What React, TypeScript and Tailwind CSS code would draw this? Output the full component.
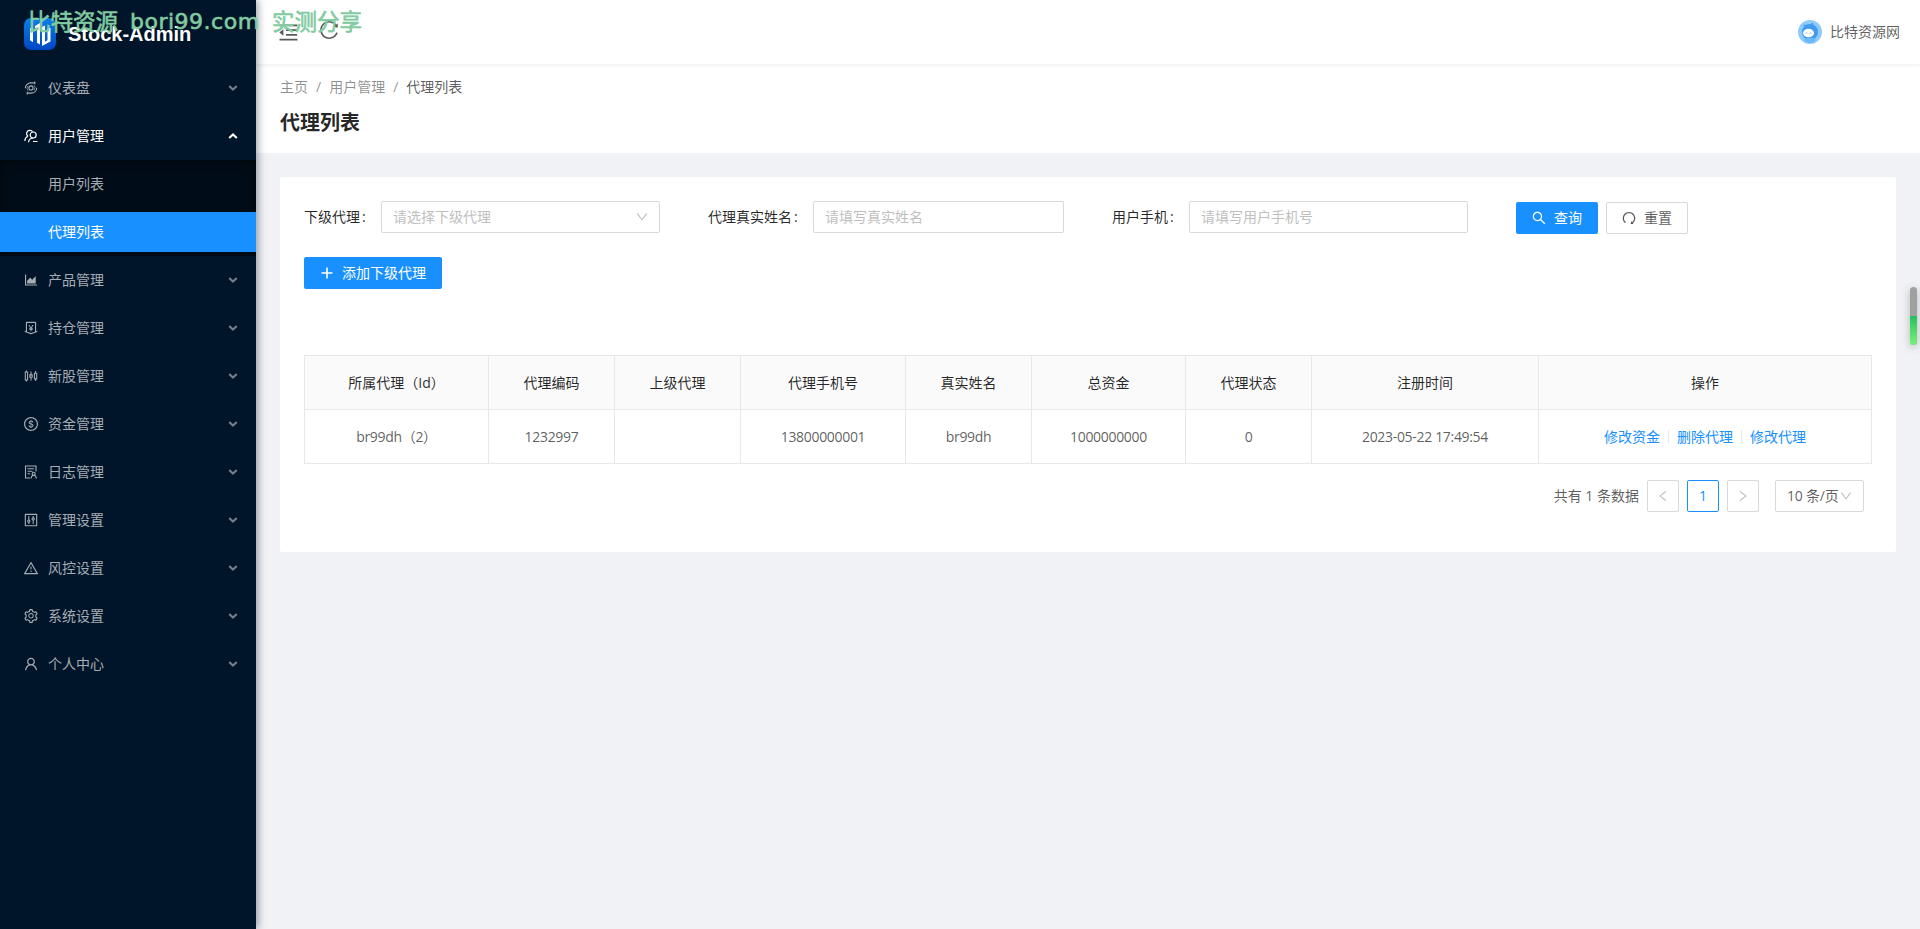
import { useState } from "react";
import type { ReactNode } from "react";
import type { IconType } from "react-icons";
import {
  AiOutlineAreaChart,
  AiOutlineControl,
  AiOutlineDollar,
  AiOutlineDown,
  AiOutlineLeft,
  AiOutlineMenuFold,
  AiOutlineMoneyCollect,
  AiOutlineRedo,
  AiOutlineReload,
  AiOutlineRight,
  AiOutlineSearch,
  AiOutlineSetting,
  AiOutlineSliders,
  AiOutlineUser,
  AiOutlineWarning,
} from "react-icons/ai";

interface MenuEntry {
  title: string;
  icon: IconType | (() => ReactNode);
  children?: string[];
}

interface Column {
  title: string;
  width: string;
  value: string;
}

function DashboardIcon() {
  return (
    <svg width="16" height="16" viewBox="-1 -1 16 16" fill="none" stroke="currentColor" strokeWidth="1.1">
      <circle cx="7" cy="7" r="2.1" />
      <path d="M1.300 7.200C1.300 4 3.800 1.900 7 1.900h4.300M10.800 .6v2.700M12.700 6.800c0 3.200-2.500 5.300-5.700 5.300H2.700M3.200 13.400v-2.700" />
      <path d="M4 9.800A4 4 0 0 1 3.800 4.800M10 4.200a4 4 0 0 1 .2 5" strokeWidth=".7" />
    </svg>
  );
}

function UsersIcon() {
  return (
    <svg width="16" height="16" viewBox="-1 -1 16 16" fill="none" stroke="currentColor" strokeWidth="1.2">
      <path d="M4 7.300A3.300 3.300 0 1 1 8.600 2.700M.8 12c.1-2.300 1.400-4 3.200-4.700" />
      <circle cx="9.200" cy="6" r="3" />
      <path d="M4.500 13.200c.3-2.400 1.700-4.200 4.700-4.200M9 12.500h4.500" />
    </svg>
  );
}

function LogIcon() {
  return (
    <svg width="16" height="16" viewBox="-1 -1 16 16" fill="none" stroke="currentColor" strokeWidth="1.1">
      <path d="M6 13H1.500V1h10.500v5.500M3.500 3.700h6.500M3.500 6.200h5M3.500 8.700h2.500" />
      <circle cx="9.700" cy="8.800" r="1.500" />
      <path d="M7 13.500c.2-1.800 1.100-3 2.700-3.200 1.600.2 2.500 1.400 2.700 3.200" />
    </svg>
  );
}

const menus: MenuEntry[] = [
  { title: "仪表盘", icon: DashboardIcon },
  { title: "用户管理", icon: UsersIcon, children: ["用户列表", "代理列表"] },
  { title: "产品管理", icon: AiOutlineAreaChart },
  { title: "持仓管理", icon: AiOutlineMoneyCollect },
  { title: "新股管理", icon: AiOutlineSliders },
  { title: "资金管理", icon: AiOutlineDollar },
  { title: "日志管理", icon: LogIcon },
  { title: "管理设置", icon: AiOutlineControl },
  { title: "风控设置", icon: AiOutlineWarning },
  { title: "系统设置", icon: AiOutlineSetting },
  { title: "个人中心", icon: AiOutlineUser },
];

const columns: Column[] = [
  { title: "所属代理（Id）", width: "w-[184px]", value: "br99dh（2）" },
  { title: "代理编码", width: "w-[126px]", value: "1232997" },
  { title: "上级代理", width: "w-[126px]", value: "" },
  { title: "代理手机号", width: "w-[165px]", value: "13800000001" },
  { title: "真实姓名", width: "w-[126px]", value: "br99dh" },
  { title: "总资金", width: "w-[154px]", value: "1000000000" },
  { title: "代理状态", width: "w-[126px]", value: "0" },
  { title: "注册时间", width: "w-[227px]", value: "2023-05-22 17:49:54" },
];

const actions = ["修改资金", "删除代理", "修改代理"];

function Arrow({ up }: { up?: boolean }) {
  return (
    <svg
      width="10"
      height="8"
      viewBox="0 0 10 8"
      fill="none"
      stroke="currentColor"
      strokeWidth="2.1"
      className={up ? "rotate-180" : "opacity-70"}
    >
      <path d="M1.200 2L5 5.500 8.800 2" />
    </svg>
  );
}

function Logo() {
  return (
    <svg width="32" height="32" viewBox="0 0 32 32">
      <defs>
        <linearGradient id="logo" x1="0" y1="0" x2="0" y2="1">
          <stop offset="0" stopColor="#0c7fe6" />
          <stop offset="1" stopColor="#0048c4" />
        </linearGradient>
      </defs>
      <rect width="32" height="32" rx="7" fill="url(#logo)" />
      <path
        d="M6 10.500l3-1.800v15.500l-3-2zM11 8l5-3v21.500l-3-1.800V9.500l-2 1zM18 9l3-1.500v16.300l2.500-1.500V10h3v13.500L18 28z"
        fill="#fff"
      />
    </svg>
  );
}

function Avatar() {
  return (
    <svg width="24" height="24" viewBox="0 0 24 24">
      <circle cx="12" cy="12" r="12" fill="#8ecbfa" />
      <path d="M6 5l3 1M14 3l1 3" stroke="#3b8fe6" strokeWidth="1.300" />
      <circle cx="12" cy="12" r="8" fill="#3f9af0" />
      <path d="M6 20c2-3 10-3 12 0-3 4-9 4-12 0z" fill="#6db6f7" />
      <ellipse cx="10.500" cy="13" rx="5.500" ry="4.300" fill="#fff" />
      <path d="M7.500 13.500l1.300-1 1 1M11.500 13.500l1.300-1 1 1" fill="none" stroke="#8ea4e8" strokeWidth=".8" />
    </svg>
  );
}

function Sidebar() {
  const [active, setActive] = useState("代理列表");

  return (
    <aside className="relative z-10 w-64 shrink-0 bg-[#001529] shadow-[2px_0_8px_rgba(0,21,41,0.4)]">
      <div className="flex h-16 items-center gap-3 pt-1 pl-6">
        <Logo />
        <h1 className="font-['Liberation_Sans',sans-serif] text-xl font-bold text-white">Stock-Admin</h1>
      </div>
      <nav className="text-[#a6adb4]">
        {menus.map((menu) => {
          const Icon = menu.icon;
          return (
            <div key={menu.title}>
              <div className={`flex h-12 items-center pr-[18px] pl-[23px] ${menu.children ? "text-white" : ""}`}>
                <Icon size={16} />
                <span className="ml-[9px] flex-1">{menu.title}</span>
                <Arrow up={!!menu.children} />
              </div>
              {menu.children && (
                <div className="flex flex-col gap-2 bg-[#000c17] py-1 shadow-[inset_0_2px_8px_rgba(0,0,0,0.45)]">
                  {menu.children.map((child) => (
                    <a
                      key={child}
                      onClick={() => setActive(child)}
                      className={`flex h-10 items-center pl-12 ${active === child ? "bg-[#1890ff] text-white" : ""}`}
                    >
                      {child}
                    </a>
                  ))}
                </div>
              )}
            </div>
          );
        })}
      </nav>
    </aside>
  );
}

function Field({ label, placeholder, select }: { label: string; placeholder: string; select?: boolean }) {
  return (
    <div className="flex w-[404px] items-center pr-12">
      <label className="shrink-0 text-black/85">
        {label}
        <span className="mr-[12px] ml-[2px] inline-block w-[7px]">:</span>
      </label>
      <div className="flex h-8 flex-1 items-center justify-between rounded-xs border border-[#d9d9d9] px-[11px] text-[#bfbfbf]">
        {placeholder}
        {select && <AiOutlineDown size={14} className="-mr-px" />}
      </div>
    </div>
  );
}

function SearchForm() {
  return (
    <div className="flex h-[33px] items-start">
      <Field label="下级代理" placeholder="请选择下级代理" select />
      <Field label="代理真实姓名" placeholder="请填写真实姓名" />
      <Field label="用户手机" placeholder="请填写用户手机号" />
      <div className="flex gap-2 pt-px">
        <button className="flex h-8 w-[82px] items-center gap-[7px] rounded-xs bg-[#1890ff] pb-px pl-[15px] text-white">
          <AiOutlineSearch size={16} />
          查询
        </button>
        <button className="flex h-8 w-[82px] items-center gap-[7px] rounded-xs border border-[#d9d9d9] pb-px pl-[14px]">
          <AiOutlineRedo size={16} />
          重置
        </button>
      </div>
    </div>
  );
}

function AgentTable() {
  return (
    <table className="w-[1568px] table-fixed border-collapse text-center">
      <thead>
        <tr className="h-[54px] bg-[#fafafa] text-black/85">
          {columns.map((col) => (
            <th key={col.title} className={`border border-[#e8e8e8] font-normal ${col.width}`}>
              {col.title}
            </th>
          ))}
          <th className="border border-[#e8e8e8] font-normal">操作</th>
        </tr>
      </thead>
      <tbody>
        <tr className="h-[54px]">
          {columns.map((col) => (
            <td key={col.title} className="border border-[#e8e8e8] tracking-[-0.32px]">
              {col.value}
            </td>
          ))}
          <td className="border border-[#e8e8e8]">
            <div className="flex items-center justify-center text-[#1890ff]">
              {actions.map((action, idx) => (
                <span key={action} className="flex items-center">
                  {idx > 0 && <i className="mx-2 h-[13px] w-px bg-[#e8e8e8]" />}
                  <a>{action}</a>
                </span>
              ))}
            </div>
          </td>
        </tr>
      </tbody>
    </table>
  );
}

function Pagination() {
  return (
    <div className="mt-4 flex h-8 items-center justify-end pr-2">
      <span className="mr-2">共有 1 条数据</span>
      <button className="mr-2 flex size-8 items-center justify-center rounded-xs border border-[#d9d9d9] text-[#bfbfbf]">
        <AiOutlineLeft size={14} />
      </button>
      <button className="mr-2 size-8 rounded-xs border border-[#1890ff] text-[#1890ff]">1</button>
      <button className="mr-4 flex size-8 items-center justify-center rounded-xs border border-[#d9d9d9] text-[#bfbfbf]">
        <AiOutlineRight size={14} />
      </button>
      <div className="flex h-8 w-[89px] items-center justify-between rounded-xs border border-[#d9d9d9] pr-[10px] pl-[11px] whitespace-nowrap">
        <span className="tracking-[-0.2px]">10 条/页</span>
        <AiOutlineDown size={14} className="shrink-0 text-[#bfbfbf]" />
      </div>
    </div>
  );
}

export default function App() {
  return (
    <div className="relative flex h-[929px] w-[1920px] overflow-hidden bg-[#f0f2f5] font-['Open_Sans','Noto_Sans_CJK_SC',sans-serif] text-sm text-black/65">
      <Sidebar />
      <main className="flex-1">
        <header className="relative flex h-16 items-center justify-between bg-white pr-5 pl-[21px] shadow-[0_1px_4px_rgba(0,21,41,0.08)]">
          <div className="flex items-center gap-[18px]">
            <AiOutlineMenuFold size={23} />
            <AiOutlineReload size={22} className="-mt-1" />
          </div>
          <div className="flex items-center gap-2">
            <Avatar />
            <span>比特资源网</span>
          </div>
        </header>

        <div className="h-[89px] bg-white px-6 pt-3">
          <div className="flex h-[22px] items-center text-black/45">
            <span>主页</span>
            <span className="mx-2">/</span>
            <span>用户管理</span>
            <span className="mx-2">/</span>
            <span className="text-black/65">代理列表</span>
          </div>
          <h2 className="mt-[9px] text-xl leading-8 font-bold text-black/85">代理列表</h2>
        </div>

        <section className="m-6 h-[375px] rounded-xs bg-white p-6">
          <SearchForm />
          <button className="mt-[23px] flex h-8 w-[138px] items-center rounded-xs bg-[#1890ff] pl-[17px] text-white">
            <svg width="12" height="12" viewBox="0 0 12 12" stroke="currentColor" strokeWidth="1.6" className="mr-[9px]">
              <path d="M6 .5v11M.5 6h11" />
            </svg>
            添加下级代理
          </button>
          <div className="mt-[66px]">
            <AgentTable />
            <Pagination />
          </div>
        </section>
      </main>

      {/* watermark */}
      <div className="pointer-events-none absolute top-[7px] left-[28px] z-20 flex h-[30px] items-center text-[22.5px] whitespace-nowrap text-[#82cba1] [-webkit-text-stroke:0.6px_#82cba1]">
        <span className="w-[102px]">比特资源</span>
        <span className="w-[142px] font-['DejaVu_Sans',sans-serif] text-[22px] tracking-[0.5px]">bori99.com</span>
        <span>实测分享</span>
      </div>

      {/* floating scroll indicator */}
      <div className="absolute top-[287px] right-[3px] z-20 flex h-[58px] w-[7px] flex-col overflow-hidden rounded-full bg-[#a0a0a0] shadow-[0_2px_8px_rgba(0,0,0,0.25)]">
        <div className="mt-[29px] flex-1 bg-linear-to-b from-[#22c05f] to-[#78f07c]" />
      </div>
    </div>
  );
}
